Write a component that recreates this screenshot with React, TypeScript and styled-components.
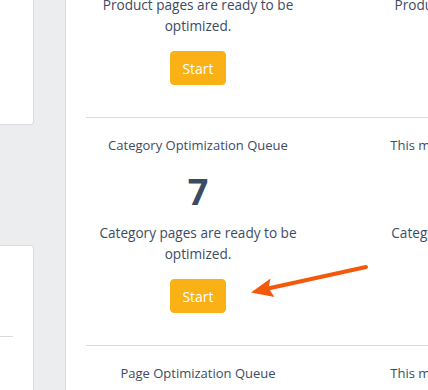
import React from "react";
import styled, { createGlobalStyle } from "styled-components";

const Global = createGlobalStyle`
  html, body { margin: 0; padding: 0; }
  body {
    background: #ebedef;
    font-family: "Open Sans", "Noto Sans", "Liberation Sans", sans-serif;
    color: #3c4b64;
  }
`;

const Page = styled.div`
  position: relative;
  display: flex;
  width: 428px;
  height: 390px;
  overflow: hidden;
`;

const Sidebar = styled.div`
  width: 34px;
  flex-shrink: 0;
  display: flex;
  flex-direction: column;
`;

const SideCard = styled.div<{ $top: number; $height: number }>`
  flex-shrink: 0;
  margin-top: ${(p) => p.$top}px;
  height: ${(p) => p.$height}px;
  background: #fff;
  border: 1px solid #d8dbe0;
  border-left: none;
  border-radius: 0 4px 4px 0;
  box-sizing: border-box;
  padding-top: 90px;
`;

const SideRule = styled.div`
  height: 1px;
  background: #d8dbe0;
  margin-right: 20px;
`;

const Main = styled.div`
  margin-left: 31px;
  flex: 1;
  background: #fff;
  border-left: 1px solid #d8dbe0;
  overflow: hidden;
`;

const Scroll = styled.div`
  margin-top: -110px;
`;

const Row = styled.div`
  margin-left: 20px;
  display: grid;
  grid-template-columns: 224px 224px;
  column-gap: 18px;
  padding: 17px 0 32px;
  border-bottom: 1px solid #d8dbe0;
`;

const Col = styled.div`
  display: flex;
  flex-direction: column;
  align-items: center;
  text-align: center;
`;

const Title = styled.div`
  font-size: 13px;
  line-height: 20px;
  color: #3c4b64;
  white-space: nowrap;
`;

const Count = styled.div`
  margin-top: 15px;
  font-size: 36px;
  line-height: 43px;
  font-weight: 700;
  color: #3c4b64;
`;

const Desc = styled.div<{ $single?: boolean }>`
  margin-top: 9px;
  font-size: 13.6px;
  line-height: 21px;
  color: #3c4b64;
  max-width: 224px;
  white-space: ${(p) => (p.$single ? "nowrap" : "normal")};
`;

const StartButton = styled.button`
  margin-top: 15px;
  height: 34px;
  padding: 0 11px;
  border: 1px solid #f9b115;
  border-radius: 4px;
  background: #f9b115;
  color: #fff;
  font-family: inherit;
  font-size: 14px;
  line-height: 21px;
  cursor: pointer;
`;

const Arrow = styled.svg`
  position: absolute;
  left: 0;
  top: 0;
  pointer-events: none;
`;

const rows = [
  {
    title: "Product Optimization Queue",
    count: "12",
    desc: "Product pages are ready to be optimized.",
    side: "This month total",
    sideDesc: "Product pages",
  },
  {
    title: "Category Optimization Queue",
    count: "7",
    desc: "Category pages are ready to be optimized.",
    side: "This month total",
    sideDesc: "Category pages",
  },
  {
    title: "Page Optimization Queue",
    count: "3",
    desc: "Pages are ready to be optimized.",
    side: "This month total",
    sideDesc: "Pages",
  },
];

export default function App() {
  return (
    <>
      <Global />
      <Page>
        <Sidebar>
          <SideCard $top={-10} $height={135} />
          <SideCard $top={120} $height={200}>
            <SideRule />
          </SideCard>
        </Sidebar>
        <Main>
          <Scroll>
            {rows.map((r) => (
              <Row key={r.title}>
                <Col>
                  <Title>{r.title}</Title>
                  <Count>{r.count}</Count>
                  <Desc>{r.desc}</Desc>
                  <StartButton>Start</StartButton>
                </Col>
                <Col>
                  <Title>{r.side}</Title>
                  <Count>0</Count>
                  <Desc $single>{r.sideDesc}</Desc>
                </Col>
              </Row>
            ))}
          </Scroll>
        </Main>
        <Arrow width="428" height="390" viewBox="0 0 428 390">
          <line x1="366" y1="267" x2="268" y2="288.5" stroke="#f4590b" strokeWidth="4" strokeLinecap="round" />
          <path d="M251 292.5 L270.5 278.5 L268.5 288 L274.4 297 Z" fill="#f4590b" />
        </Arrow>
      </Page>
    </>
  );
}
